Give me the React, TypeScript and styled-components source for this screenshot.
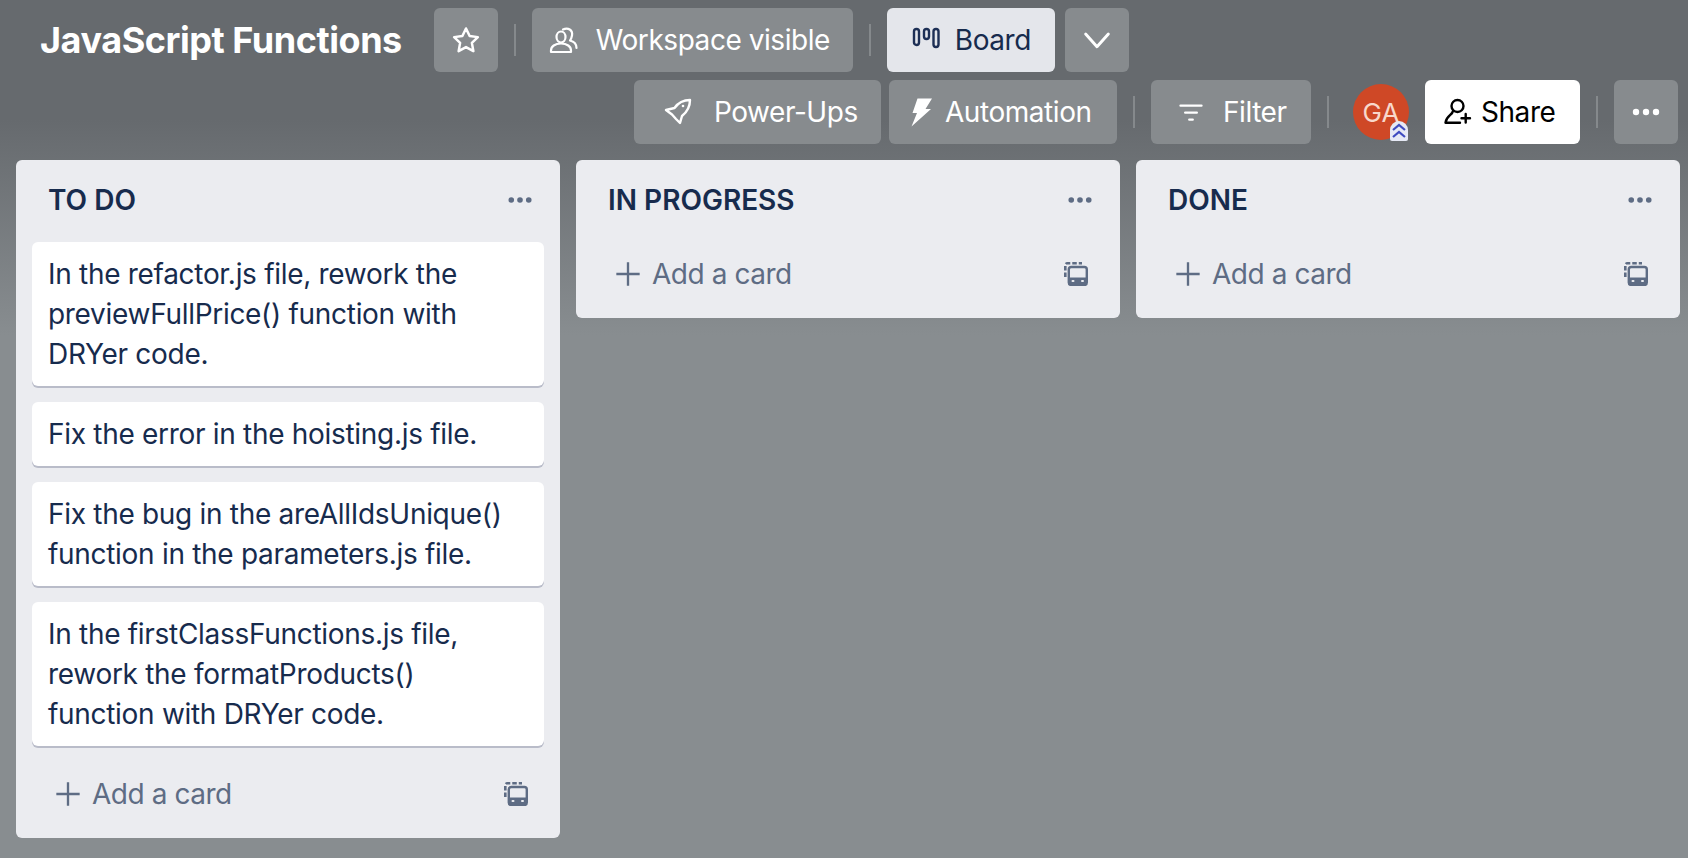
import React from "react";
import styled, { createGlobalStyle } from "styled-components";

const GlobalStyle = createGlobalStyle`
  html, body {
    margin: 0;
    padding: 0;
    height: 100%;
  }
  body {
    font-family: Inter, "Liberation Sans", sans-serif;
    overflow: hidden;
  }
`;

const Page = styled.div`
  width: 1688px;
  height: 858px;
  overflow: hidden;
  background: linear-gradient(180deg, #666a6e 0, #666a6e 120px, #888d90 335px, #888d90 100%);
`;

const Header = styled.header`
  display: flex;
  flex-wrap: wrap;
  row-gap: 8px;
  padding: 8px 10px 16px 8px;
`;

const Group = styled.div<{ $right?: boolean }>`
  display: flex;
  align-items: center;
  margin-left: ${({ $right }) => ($right ? "auto" : "0")};
`;

const Title = styled.h1`
  margin: 0 32px 0 32px;
  font-size: 36px;
  font-weight: 700;
  letter-spacing: -0.45px;
  color: #fff;
`;

const Button = styled.button<{ $variant?: "light" | "white"; $w: number; $pad?: number; $mr?: number }>`
  display: flex;
  align-items: center;
  justify-content: ${({ $pad }) => ($pad === undefined ? "center" : "flex-start")};
  width: ${({ $w }) => $w}px;
  height: 64px;
  margin-right: ${({ $mr }) => $mr ?? 0}px;
  padding: 0 0 0 ${({ $pad }) => $pad ?? 0}px;
  border: 0;
  border-radius: 6px;
  font-family: inherit;
  font-size: 28px;
  letter-spacing: -0.45px;
  white-space: nowrap;
  color: ${({ $variant }) => ($variant === "light" ? "#172b4d" : $variant === "white" ? "#000" : "#fff")};
  background: ${({ $variant }) => ($variant === "light" ? "#e4e6eb" : $variant === "white" ? "#fff" : "#878b8e")};
`;

const Label = styled.span<{ $gap: number }>`
  margin-left: ${({ $gap }) => $gap}px;
`;

const Divider = styled.span<{ $ml: number; $mr: number }>`
  width: 2px;
  height: 32px;
  margin: 0 ${({ $mr }) => $mr}px 0 ${({ $ml }) => $ml}px;
  background: #85898c;
`;

const Avatar = styled.div`
  position: relative;
  display: flex;
  align-items: center;
  justify-content: center;
  width: 56px;
  height: 56px;
  margin-right: 16px;
  border-radius: 50%;
  font-size: 26px;
  color: #f8d8cc;
  background: #cf4826;
`;

const AvatarBadge = styled.span`
  position: absolute;
  right: 1px;
  bottom: -1px;
  display: flex;
  width: 18px;
  height: 20px;
  border-radius: 9px 9px 2px 2px;
  background: #e6e9f5;
`;

const Board = styled.main`
  display: grid;
  grid-template-columns: repeat(3, 544px);
  gap: 16px;
  align-items: start;
  padding: 0 8px 0 16px;
`;

const List = styled.section`
  padding-bottom: 8px;
  border-radius: 6px;
  background: #ebecf0;
`;

const ListHeader = styled.div`
  display: flex;
  align-items: center;
  justify-content: space-between;
  height: 80px;
  padding: 0 26px 0 32px;
`;

const ListTitle = styled.h2`
  margin: 0;
  font-size: 28px;
  font-weight: 600;
  color: #172b4d;
`;

const Cards = styled.div`
  display: flex;
  flex-direction: column;
  gap: 16px;
  padding: 2px 16px 0;
`;

const Card = styled.article`
  padding: 12px 16px;
  border-radius: 6px;
  font-size: 28px;
  line-height: 40px;
  letter-spacing: -0.3px;
  color: #172b4d;
  background: #fff;
  box-shadow: 0 2px 0 #b9bcc9;
`;

const AddRow = styled.div<{ $first?: boolean }>`
  display: flex;
  align-items: center;
  justify-content: space-between;
  height: 72px;
  margin-top: ${({ $first }) => ($first ? "-2px" : "12px")};
  padding: 0 32px 0 38px;
  font-size: 28px;
  letter-spacing: -0.45px;
  color: #5e6c84;
`;

const AddLabel = styled.div`
  display: flex;
  align-items: center;
  gap: 10px;
`;

const StarIcon = () => (
  <svg width="30" height="30" viewBox="0 0 24 24" fill="none" stroke="#fff" strokeWidth="2" strokeLinejoin="round">
    <path d="M12 2.8l2.9 6 6.6.9-4.8 4.6 1.2 6.6-5.9-3.2-5.9 3.2 1.2-6.6-4.8-4.6 6.6-.9z" />
  </svg>
);

const PeopleIcon = () => (
  <svg width="30" height="30" viewBox="0 0 30 30" fill="none" stroke="#fff" strokeWidth="2.2" strokeLinejoin="round" strokeLinecap="round">
    <ellipse cx="13" cy="12" rx="4.5" ry="5.5" />
    <path d="M3 27v-1.5c0-4 4-7 10-7s10 3 10 7V27z" />
    <path d="M15 4.5c5-2.5 10 .5 9 6-.5 2.5-1 4-2 5 4 1 6.5 3.5 6.5 7.5" />
  </svg>
);

const BoardIcon = () => (
  <svg width="28" height="28" viewBox="0 0 28 28" fill="none" stroke="#1d2f55" strokeWidth="2.4">
    <rect x="2" y="3" width="5" height="16" rx="2.5" />
    <rect x="12" y="3" width="5" height="10" rx="2.5" />
    <rect x="21.5" y="3" width="5" height="18" rx="2.5" />
  </svg>
);

const ChevronIcon = () => (
  <svg width="32" height="32" viewBox="0 0 24 24" fill="none" stroke="#fff" strokeWidth="2.2" strokeLinecap="round" strokeLinejoin="round">
    <path d="M3.5 7.5L12 17l8.5-9.5" />
  </svg>
);

const RocketIcon = () => (
  <svg width="30" height="30" viewBox="0 0 30 30" fill="none" stroke="#fff" strokeWidth="2.4" strokeLinejoin="round" strokeLinecap="round">
    <path d="M26 3C19 3 14 6 10.5 11L2 13l6 4.5 4 4.5 4 4 2-7C23 15 26 10 26 3z" />
    <circle cx="19" cy="9" r="1.3" fill="#fff" stroke="none" />
  </svg>
);

const BoltIcon = () => (
  <svg width="28" height="32" viewBox="0 0 28 32" fill="#fff">
    <path d="M8.5 2.5H23L16.5 13H22L2.5 30.5 8 17H3.5z" />
  </svg>
);

const FilterIcon = () => (
  <svg width="28" height="28" viewBox="0 0 24 24" fill="none" stroke="#fff" strokeWidth="2" strokeLinecap="round">
    <path d="M3 6.5h18M7 12.5h10M10.5 18.5h3" />
  </svg>
);

const ShareIcon = () => (
  <svg width="30" height="30" viewBox="0 0 30 30" fill="none" stroke="#000" strokeWidth="2.4" strokeLinecap="round" strokeLinejoin="round">
    <ellipse cx="14.5" cy="9" rx="6" ry="6" />
    <path d="M10 14c-.5 4-7 5-7.5 11.700H17" />
    <path d="M22.7 17v8.500M18.5 21.300H27" />
  </svg>
);

const DotsIcon = ({ color, size }: { color: string; size: number }) => (
  <svg width={size} height={size} viewBox="0 0 32 32" fill={color}>
    <circle cx="6" cy="16" r="3.2" />
    <circle cx="16" cy="16" r="3.2" />
    <circle cx="26" cy="16" r="3.2" />
  </svg>
);

const PlusIcon = () => (
  <svg width="28" height="28" viewBox="0 0 24 24" fill="none" stroke="#5e6c84" strokeWidth="2">
    <path d="M12 2v20M2 12h20" />
  </svg>
);

const TemplateIcon = () => (
  <svg width="24" height="24" viewBox="0 0 24 24" fill="none">
    <path d="M1.3 15V3.3a2 2 0 0 1 2-2H18" stroke="#5e6c84" strokeWidth="2.6" strokeDasharray="4.5 2" />
    <rect x="4.8" y="5" width="18" height="18" rx="2.5" stroke="#5e6c84" strokeWidth="2.4" />
    <path d="M4.8 15.5h18v5a2.5 2.5 0 0 1-2.5 2.5h-13a2.5 2.5 0 0 1-2.5-2.5z" fill="#5e6c84" />
    <rect x="7.5" y="18" width="3" height="2" rx="1" fill="#ebecf0" />
    <rect x="17" y="18" width="3" height="2" rx="1" fill="#ebecf0" />
  </svg>
);

const BadgeIcon = () => (
  <svg width="18" height="20" viewBox="0 0 18 20" fill="none" stroke="#3f4bc0" strokeWidth="2.2">
    <path d="M3 9l6-5 6 5M3 16l6-5 6 5" />
  </svg>
);

const lists = [
  {
    title: "TO DO",
    cards: [
      "In the refactor.js file, rework the previewFullPrice() function with DRYer code.",
      "Fix the error in the hoisting.js file.",
      "Fix the bug in the areAllIdsUnique() function in the parameters.js file.",
      "In the firstClassFunctions.js file, rework the formatProducts() function with DRYer code.",
    ],
  },
  { title: "IN PROGRESS", cards: [] as string[] },
  { title: "DONE", cards: [] as string[] },
];

export default function App() {
  return (
    <Page>
      <GlobalStyle />
      <Header>
        <Group>
          <Title>JavaScript Functions</Title>
          <Button $w={64}>
            <StarIcon />
          </Button>
          <Divider $ml={16} $mr={16} />
          <Button $w={321} $pad={16}>
            <PeopleIcon />
            <Label $gap={18}>Workspace visible</Label>
          </Button>
          <Divider $ml={16} $mr={16} />
          <Button $variant="light" $w={168} $mr={10} $pad={25}>
            <BoardIcon />
            <Label $gap={15}>Board</Label>
          </Button>
          <Button $w={64}>
            <ChevronIcon />
          </Button>
        </Group>
        <Group $right>
          <Button $w={247} $mr={8} $pad={30}>
            <RocketIcon />
            <Label $gap={20}>Power-Ups</Label>
          </Button>
          <Button $w={228} $pad={20}>
            <BoltIcon />
            <Label $gap={8}>Automation</Label>
          </Button>
          <Divider $ml={16} $mr={16} />
          <Button $w={160} $pad={26}>
            <FilterIcon />
            <Label $gap={18}>Filter</Label>
          </Button>
          <Divider $ml={16} $mr={24} />
          <Avatar>
            GA
            <AvatarBadge>
              <BadgeIcon />
            </AvatarBadge>
          </Avatar>
          <Button $variant="white" $w={155} $pad={18}>
            <ShareIcon />
            <Label $gap={8}>Share</Label>
          </Button>
          <Divider $ml={16} $mr={16} />
          <Button $w={64}>
            <DotsIcon color="#fff" size={32} />
          </Button>
        </Group>
      </Header>
      <Board>
        {lists.map((list) => (
          <List key={list.title}>
            <ListHeader>
              <ListTitle>{list.title}</ListTitle>
              <DotsIcon color="#5e6c84" size={28} />
            </ListHeader>
            {list.cards.length > 0 && (
              <Cards>
                {list.cards.map((text) => (
                  <Card key={text}>{text}</Card>
                ))}
              </Cards>
            )}
            <AddRow $first={list.cards.length === 0}>
              <AddLabel>
                <PlusIcon />
                Add a card
              </AddLabel>
              <TemplateIcon />
            </AddRow>
          </List>
        ))}
      </Board>
    </Page>
  );
}
